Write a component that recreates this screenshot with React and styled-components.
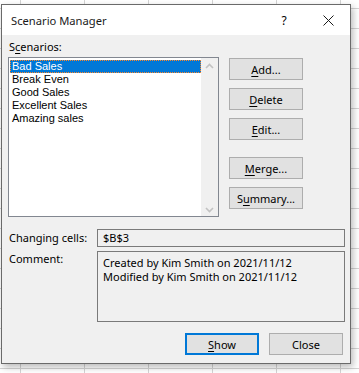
import styled, { createGlobalStyle } from 'styled-components';

const GlobalStyle = createGlobalStyle`
  html, body {
    margin: 0;
    padding: 0;
  }
  body {
    width: 359px;
    height: 373px;
    overflow: hidden;
    font-family: "Noto Sans", "Open Sans", sans-serif;
    background-color: #ffffff;
    background-image:
      linear-gradient(to right, #d4d4d4 1px, transparent 1px),
      linear-gradient(to bottom, #d4d4d4 1px, transparent 1px);
    background-size: 64px 20px;
    background-position: 20px 8px;
  }
`;

const Dialog = styled.div`
  margin: 4px 0 0 1px;
  width: 350px;
  height: 360px;
  box-sizing: border-box;
  border: 1px solid #6a6a6a;
  background: #f0f0f0;
  box-shadow: 2px 3px 7px rgba(0, 0, 0, 0.28);
  display: flex;
  flex-direction: column;
  font-size: 11px;
  color: #000;
`;

const TitleBar = styled.div`
  height: 30px;
  flex-shrink: 0;
  background: #ffffff;
  display: flex;
  align-items: center;
  padding-left: 9px;
`;

const Title = styled.div`
  flex-grow: 1;
  font-size: 11.2px;
  color: #1a1a1a;
`;

const TitleButton = styled.div`
  width: 44px;
  height: 30px;
  display: flex;
  align-items: center;
  justify-content: center;
  font-size: 12px;
`;

const Body = styled.div`
  flex-grow: 1;
  display: flex;
  flex-direction: column;
  padding: 4px 7px 0 6px;
`;

const Label = styled.div`
  line-height: 16px;
  padding-left: 1px;
  white-space: nowrap;
`;

const Key = styled.span`
  text-decoration: underline;
  text-underline-offset: 2px;
`;

const TopRow = styled.div`
  display: flex;
  gap: 10px;
  margin-top: 2px;
`;

const ListBox = styled.div`
  width: 211px;
  height: 160px;
  box-sizing: border-box;
  border: 1px solid #828790;
  background: #ffffff;
  display: flex;
`;

const Items = styled.ul`
  list-style: none;
  margin: 0;
  padding: 2px 0 0 1px;
  flex-grow: 1;
  font-family: "Liberation Sans", Arial, sans-serif;
  font-size: 11px;
`;

const Item = styled.li`
  height: 13px;
  line-height: 13px;
  padding-left: 2px;
  box-sizing: border-box;
  white-space: nowrap;
  background: ${p => (p.$selected ? '#0078d7' : 'transparent')};
  color: ${p => (p.$selected ? '#ffffff' : '#000000')};
  outline: ${p => (p.$selected ? '1px dotted #ff8728' : 'none')};
  outline-offset: -1px;
`;

const ScrollBar = styled.div`
  width: 17px;
  background: #f0f0f0;
  display: flex;
  flex-direction: column;
  justify-content: space-between;
  align-items: center;
  padding: 5px 0 3px;
  box-sizing: border-box;
`;

const SideButtons = styled.div`
  display: flex;
  flex-direction: column;
  gap: 8px;
  padding-top: 1px;
`;

const Button = styled.div`
  width: 74px;
  height: 22px;
  box-sizing: border-box;
  border: ${p => (p.$default ? '2px solid #0078d7' : '1px solid #adadad')};
  background: #e1e1e1;
  display: flex;
  align-items: center;
  justify-content: center;
  margin-top: ${p => (p.$spaced ? '9px' : '0')};
`;

const FieldRow = styled.div`
  display: grid;
  grid-template-columns: 89px 248px;
  align-items: ${p => (p.$top ? 'start' : 'center')};
  margin-top: ${p => p.$gap}px;
`;

const Field = styled.div`
  height: ${p => p.$h}px;
  box-sizing: border-box;
  border: 1px solid #7a7a7a;
  background: #f0f0f0;
  padding: ${p => (p.$multi ? '4px 5px' : '0 5px')};
  line-height: ${p => (p.$multi ? '14px' : '16px')};
`;

const Footer = styled.div`
  display: flex;
  justify-content: flex-end;
  gap: 10px;
  margin-top: 11px;
`;

const Chevron = ({ up }) => (
  <svg width="9" height="6" viewBox="0 0 9 6">
    <path
      d={up ? 'M1 5 L4.5 1.5 L8 5' : 'M1 1 L4.5 4.5 L8 1'}
      fill="none"
      stroke="#c2c2c2"
      strokeWidth="1.6"
    />
  </svg>
);

const CloseIcon = () => (
  <svg width="11" height="11" viewBox="0 0 11 11">
    <path d="M0.5 0.5 L10.5 10.5 M10.5 0.5 L0.5 10.5" stroke="#1a1a1a" strokeWidth="1" />
  </svg>
);

const scenarios = ['Bad Sales', 'Break Even', 'Good Sales', 'Excellent Sales', 'Amazing sales'];

export default function App() {
  return (
    <>
      <GlobalStyle />
      <Dialog>
        <TitleBar>
          <Title>Scenario Manager</Title>
          <TitleButton>?</TitleButton>
          <TitleButton><CloseIcon /></TitleButton>
        </TitleBar>
        <Body>
          <Label>S<Key>c</Key>enarios:</Label>
          <TopRow>
            <ListBox>
              <Items>
                {scenarios.map((s, i) => (
                  <Item key={s} $selected={i === 0}>{s}</Item>
                ))}
              </Items>
              <ScrollBar>
                <Chevron up />
                <Chevron />
              </ScrollBar>
            </ListBox>
            <SideButtons>
              <Button><span><Key>A</Key>dd...</span></Button>
              <Button><span><Key>D</Key>elete</span></Button>
              <Button><span><Key>E</Key>dit...</span></Button>
              <Button $spaced><span><Key>M</Key>erge...</span></Button>
              <Button><span>S<Key>u</Key>mmary...</span></Button>
            </SideButtons>
          </TopRow>
          <FieldRow $gap={12}>
            <Label>Changing cells:</Label>
            <Field $h={18}>$B$3</Field>
          </FieldRow>
          <FieldRow $gap={4} $top>
            <Label>Comment:</Label>
            <Field $h={71} $multi>
              Created by Kim Smith on 2021/11/12
              <br />
              Modified by Kim Smith on 2021/11/12
            </Field>
          </FieldRow>
          <Footer>
            <Button $default><span><Key>S</Key>how</span></Button>
            <Button>Close</Button>
          </Footer>
        </Body>
      </Dialog>
    </>
  );
}
